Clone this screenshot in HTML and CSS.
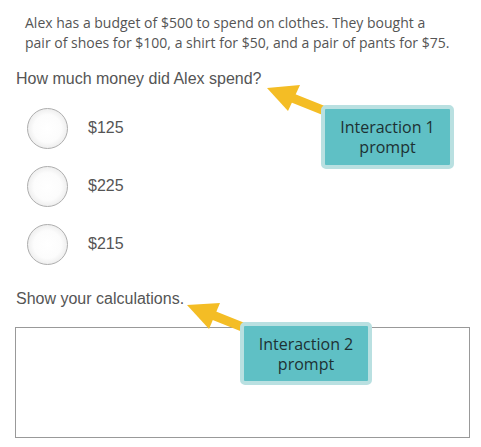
FILE: index.html
```html
<!DOCTYPE html>
<html>
<head>
<meta charset="utf-8">
<link rel="stylesheet" href="styles.css">
</head>
<body>
<main class="page">
  <p class="passage">Alex has a budget of $500 to spend on clothes. They bought a pair of shoes for $100, a shirt for $50, and a pair of pants for $75.</p>
  <p class="prompt">How much money did Alex spend?</p>
  <ul class="options">
    <li class="option"><span class="radio"></span><span class="label">$125</span></li>
    <li class="option"><span class="radio"></span><span class="label">$225</span></li>
    <li class="option"><span class="radio"></span><span class="label">$215</span></li>
  </ul>
  <p class="prompt prompt-2">Show your calculations.</p>
  <div class="answer-box"></div>

  <svg class="arrows" width="481" height="447" viewBox="0 0 481 447">
    <g fill="#f4bd25" stroke="none">
      <line x1="290" y1="97" x2="335" y2="115" stroke="#f4bd25" stroke-width="9"/>
      <polygon points="267,88 300,85 288,111"/>
      <line x1="210" y1="314" x2="255" y2="332" stroke="#f4bd25" stroke-width="9"/>
      <polygon points="187,305 220,303 209,329"/>
    </g>
  </svg>
  <div class="callout callout-1">Interaction 1<br>prompt</div>
  <div class="callout callout-2">Interaction 2<br>prompt</div>
</main>
</body>
</html>
```

FILE: styles.css
```css
* { box-sizing: border-box; }
html, body { margin: 0; padding: 0; background: #fff; }
.page {
  position: relative;
  width: 481px;
  height: 447px;
  overflow: hidden;
  color: #555;
}
.passage {
  margin: 0;
  padding: 13px 0 0 25px;
  width: 451px;
  font-family: "Open Sans", sans-serif;
  font-size: 14px;
  line-height: 20px;
}
.prompt {
  margin: 17px 0 0 16px;
  font-family: "Liberation Sans", Arial, sans-serif;
  font-size: 16px;
  line-height: 18px;
}
.options {
  list-style: none;
  margin: 19px 0 0 0;
  padding: 0 0 0 27px;
  display: flex;
  flex-direction: column;
  gap: 16px;
}
.option {
  display: flex;
  align-items: center;
  height: 42px;
}
.radio {
  width: 41px;
  height: 41px;
  border-radius: 50%;
  border: 1px solid #aeaeae;
  background: radial-gradient(circle at 50% 50%, #ffffff 0%, #fcfcfc 50%, #e9e9e9 80%, #d6d6d6 100%);
}
.label {
  margin-left: 20px;
  font-family: "Liberation Sans", Arial, sans-serif;
  font-size: 16px;
}
.prompt-2 { margin-top: 25px; }
.answer-box {
  margin: 19px 0 0 15px;
  width: 455px;
  height: 111px;
  border: 1px solid #999;
}
.arrows {
  position: absolute;
  left: 0;
  top: 0;
  pointer-events: none;
}
.callout {
  position: absolute;
  width: 133px;
  height: 64px;
  border: 4px solid #b9e0e1;
  border-radius: 5px;
  background: #5fc0c5;
  color: #1d3133;
  font-family: "Open Sans", sans-serif;
  font-size: 16px;
  line-height: 20px;
  text-align: center;
  display: flex;
  align-items: center;
  justify-content: center;
}
.callout-1 { left: 321px; top: 105px; }
.callout-2 { left: 240px; top: 322px; width: 132px; height: 63px; }
```
